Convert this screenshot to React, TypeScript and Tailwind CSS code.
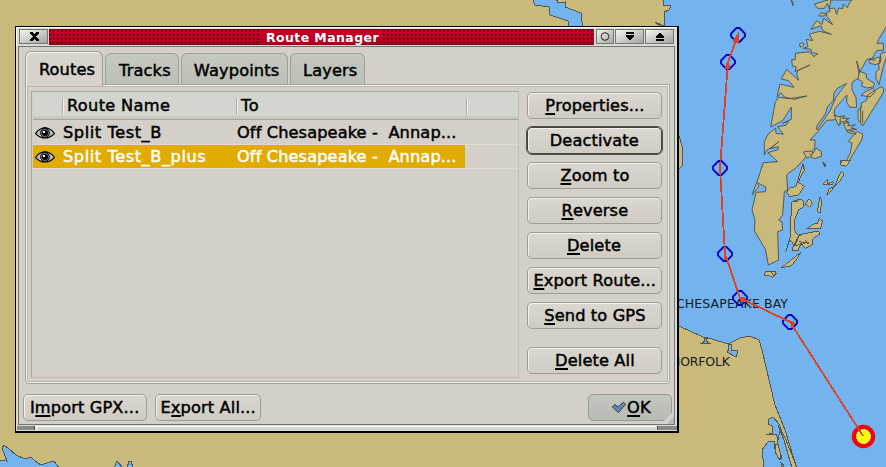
import React from "react";

const label = (s: string) => {
  const i = s.indexOf("&");
  if (i < 0) return s;
  return (
    <>
      {s.slice(0, i)}
      <span className="inline-block h-[18px] border-b-2 border-black align-top">{s[i + 1]}</span>
      {s.slice(i + 2)}
    </>
  );
};

function T({ children, className = "tracking-[0.12px]" }: { children: React.ReactNode; className?: string }) {
  return (
    <span
      className={`inline-block shrink-0 scale-x-[1.08] whitespace-pre text-[15px] leading-[18px] [-webkit-text-stroke:0.45px_currentColor] ${className}`}
    >
      {children}
    </span>
  );
}

function Btn({ text, className = "border-[#a19d8e]" }: { text: string; className?: string }) {
  return (
    <button
      className={`flex h-[27px] shrink-0 items-center justify-center rounded-[5px] border bg-gradient-to-b from-[#dbd7d0] to-[#d0ccc4] shadow-[inset_1px_1px_0_#f2f0ea] ${className}`}
    >
      <T>{label(text)}</T>
    </button>
  );
}

function Tab({ text, active, className = "" }: { text: string; active?: boolean; className?: string }) {
  return (
    <div
      className={`flex justify-center rounded-t-[6px] border border-b-0 border-[#9da194] ${
        active
          ? "relative z-10 h-[35px] bg-[#d7d2cb] pl-[6px] pt-[9px] shadow-[inset_1px_1px_0_#f4f2ee]"
          : "mb-[2px] h-[31px] bg-gradient-to-b from-[#c4c8be] to-[#bbbfb5] pl-[5px] pt-[8px]"
      } ${className}`}
    >
      <T>{text}</T>
    </div>
  );
}

function TitleBtn({ children, className }: { children: React.ReactNode; className: string }) {
  return (
    <div className={`flex h-[15px] items-center justify-center border border-[#74776f] bg-gradient-to-br from-[#f4f5f2] to-[#a3a69f] ${className}`}>
      <svg width="14" height="11" viewBox="0 0 14 11" shapeRendering="crispEdges">{children}</svg>
    </div>
  );
}

function Eye() {
  return (
    <svg width="20" height="14" viewBox="0 0 20 14" className="shrink-0">
      <path d="M0.5 7.5 Q4 2.5 10 1.7 Q16 2.5 19.5 7.5 Q15 12 10 12 Q5 12 0.5 7.5Z" fill="#fff" stroke="#000" strokeWidth="1.2" />
      <circle cx="10" cy="7" r="4.5" fill="#777" stroke="#000" />
      <circle cx="10" cy="7" r="3" fill="#000" />
      <path d="M8 5h2v2H8z" fill="#fff" />
      <path d="M3 6v3M5 4v5M15 4v6M17 6v3" stroke="#555" strokeWidth="0.8" />
    </svg>
  );
}

function Row({ name, selected }: { name: string; selected?: boolean }) {
  return (
    <div className={`flex h-6 border-b border-[#dedad4] ${selected ? "text-white" : "text-black"}`}>
      <div className={`flex h-[23px] w-[432px] items-center ${selected ? "bg-[#e2ab00]" : ""}`}>
        <div className="w-[30px] pl-[2px]">
          <Eye />
        </div>
        <div className="w-[174px]">
          <T className="origin-left tracking-[0.52px]">{name}</T>
        </div>
        <T className="origin-left tracking-[0.1px]">{"Off Chesapeake -  Annap..."}</T>
      </div>
    </div>
  );
}

function HeadSep() {
  return <div className="h-[16px] w-[2px] border-l border-r border-l-[#a6aaa2] border-r-[#f4f6f2]" />;
}

const waypoints = [[738, 35], [728, 62], [720, 168], [725, 254], [740, 298], [790, 322]];
const arrows = [
  "738,34 733,41 738,43",
  "728,61 725,68 730,69",
  "724,254 724,259 728,260",
  "740,297 741,301 745,301 744,297",
  "790,321 792,327 795,323",
];

function Chart() {
  return (
    <svg className="absolute inset-0" width="886" height="467" viewBox="0 0 886 467" shapeRendering="crispEdges">
      <rect width="886" height="467" fill="#73b4f0" />
      <g fill="#c9b97a" stroke="#54584f" strokeWidth="1">
        <path d="M-2 -2H663V5L671 6L669 10L664 12V26L655 22L665 30V120L679 136L682 146L683 158L682 166L679 169L660 190V318L679 326L703 337L712 339L728 344L740 338L750 336L759 340L762 350L775 405L785 430L797 469H-2Z" />
      </g>
      <g fill="#73b4f0" stroke="#54584f" strokeWidth="1">
        <path d="M532 -2L535 5L549 7L550 15L568 21L570 30H583L581 13L565 7V2L558 3L556 -2Z" />
        <path d="M-2 460L7 461L2 448L4 445L9 449L16 455L25 459L31 457L35 461L41 465L50 462L54 461L59 468H-2Z" />
        <path d="M114 468L117 461L123 468ZM127 468L129 461H131L133 468Z" />
        <path d="M704 338L705 341L702 343H709L706 341L707 338Z" />
        <path d="M728 344L729 349L727 352L736 357L738 351L731 350L732 344Z" />
        <path d="M769 419L773 417L779 424L782 431L778 440L776 434L766 435L773 433L772 426L768 424Z" />
        <path d="M764 468L762 450L768 442L774 441L775 449L782 459L780 452L777 444L780 431L785 440L792 468Z" />
      </g>
      <g fill="#c9b97a" stroke="#54584f" strokeWidth="1">
        <path d="M775 445L778 444L781 456L780 460L775 452ZM778 425L786 440L797 468H792L784 440ZM781 463L784 465L782 468Z" />
      </g>
      <g transform="translate(766 0) scale(.33333)" fill="#c9b97a" stroke="#54584f" strokeWidth="3" strokeLinejoin="bevel">
        <path d="M200 -4L170 5L145 12L155 25L175 25L184 10L190 25L192 34L181 38L183 50L200 74L173 55L167 74L152 62L135 88L165 77L170 92L196 103L161 94L130 102L140 122L121 118L126 140L112 145L135 148L137 158L156 161L143 170L130 155L88 160L88 179L77 179L79 198L91 201L87 215L132 195L95 212L92 222L98 241L62 208L46 237L68 242L84 262L42 252L33 292L45 278L55 291L85 298L123 288L70 296L38 292L28 306L14 381L50 362L76 322V358L50 370L68 364L60 376L35 380L52 403L30 400L29 384L6 403L-5 425V465L3 450L23 438L39 424L13 446L38 440L36 449L6 458L35 485L-8 488L-25 540L-42 585L-22 560L-25 548L0 562L-2 575L-30 577L-42 630L-33 660L-35 692L-2 748L7 795L38 780L35 695L50 690L48 665L38 660L50 645L55 575L65 570L62 525L67 520L92 502L132 458L146 444L147 420L132 420L156 394L182 361L225 358L204 342L206 327L243 285L242 307L252 322L272 322L270 292L258 270V247L278 234L280 226L272 183L282 215L303 178L318 175L333 151H352V130H333L338 118L364 75V-4Z" />
        <path fill="#73b4f0" d="M242 250L213 266L204 279L202 301L184 321L178 342L152 379L153 390L192 333L210 291ZM195 0L190 26L206 24L212 43L218 24L231 26L231 12L245 23L247 15L257 0Z" />
        <path d="M158 48L165 38L182 42L174 48ZM100 132L110 128L114 135L104 142ZM309 180L345 170L343 188L329 194L312 190ZM362 155L345 160L338 195L340 208L330 215V235L339 254L352 199L364 161ZM276 237L281 214L300 221L302 235L325 250L323 261L302 264L286 258L291 247ZM298 275L320 265L328 276L312 291L285 286ZM345 260L353 265L352 278L290 378L276 358L276 330L286 323V309L302 301L305 285ZM204 345L215 350L237 348L228 355L250 355L238 361L247 366L225 365L218 378ZM232 370L250 368L245 378L268 374L254 384L272 388L241 391L265 395L270 403L244 397ZM274 394L290 402L288 418L240 498L225 495L223 481L239 486L253 460L258 429L247 425L257 412ZM112 456L130 453L143 458L150 444L166 455V469L146 476L132 470L123 474ZM104 525L111 492L116 510ZM170 486L177 501ZM75 0L82 18L80 4Z" />
        <path fill="none" d="M284 320V366M290 332V370M130 460L137 468L140 455M223 348L222 376M309 178L328 181" />
      </g>
      <g transform="translate(666 160) scale(.33333)" fill="#c9b97a" stroke="#54584f" strokeWidth="3">
        <path d="M411 12L415 30L405 47L397 68L415 79L397 105L372 110L361 98L370 85L390 79L402 39ZM527 0L524 15L541 19L554 0ZM472 8L478 13V21ZM470 72L486 56L485 72L502 65L499 74ZM526 34L533 43L521 65L481 106L489 88L506 77ZM462 110L468 124L462 158L454 155ZM429 117L440 130L430 142L418 132ZM377 125L405 117L413 126V140L397 150L385 183V212L399 228L387 257L370 239L359 277L372 235ZM421 207L446 190H455L460 175L470 183L464 205ZM377 271L399 224L458 213L461 222L440 237V253L418 265L405 250L396 273ZM346 323L406 276L377 317ZM294 345L300 334L328 333L331 340L321 352L309 346Z" />
        <path fill="none" d="M384 125L397 123L393 117M399 228L410 222M387 257L417 251M316 336L321 346L331 340M400 245L430 250L416 240" />
      </g>
      <g shapeRendering="auto" fontSize="12.5" fill="#141b22">
        <text x="676" y="308" textLength="112">CHESAPEAKE BAY</text>
        <text x="671" y="366" textLength="59">NORFOLK</text>
      </g>
      {waypoints.map(([x, y]) => (
        <g key={y} transform={`translate(${x} ${y})`}>
          <path d="M-1.5 -7H1.5L7 -1.5V1.5L1.5 7H-1.5L-7 1.5V-1.5Z" fill="none" stroke="#0000c0" strokeWidth="1.8" shapeRendering="auto" />
          <rect x="-1" y="-1" width="2" height="2" fill="#0000c0" />
        </g>
      ))}
      <circle cx="863.5" cy="436.5" r="9.5" fill="#ff0" stroke="#f00" strokeWidth="4.4" shapeRendering="auto" />
      <circle cx="863.5" cy="436.5" r="7" fill="none" stroke="#b8cf9c" strokeWidth="1" />
      <path d="M738 35L728 62L720 168L725 254L740 298L790 322L863 436" fill="none" stroke="#e04023" strokeWidth="1.8" />
      {arrows.map((p) => (
        <polygon key={p} points={p} fill="#e04023" stroke="#e04023" />
      ))}
    </svg>
  );
}

const stipple =
  "h-full bg-[radial-gradient(circle_at_1px_1px,#73001b_0.7px,transparent_0.9px),radial-gradient(circle_at_2px_2px,#e02848_0.5px,transparent_0.8px)] bg-[size:4px_4px]";

export default function App() {
  return (
    <div className="relative h-[467px] w-[886px] overflow-hidden font-['DejaVu_Sans',sans-serif] text-black">
      <Chart />
      <div className="absolute left-[15px] top-[26px] flex h-[407px] w-[664px] flex-col border border-r-2 border-b-2 border-black bg-[#d9dbd5]">
        <div className="flex h-[19px] shrink-0 gap-px border-t border-l border-white pl-[2px] pr-[3px] pt-px">
          <TitleBtn className="w-[29px]">
            <path d="M3 1h3v1h1v1h1V2h1V1h3v2h-1v1h-1v1H9v1h1v1h1v1h1v2H9V9H8V8H7v1H6v1H3V8h1V7h1V6h1V5H5V4H4V3H3z" fill="#000" />
          </TitleBtn>
          <div className="flex h-[16px] flex-1 border-y border-[#8c001d] bg-gradient-to-b from-[#c90028] to-[#a7001e]">
            <div className={`w-[211px] ${stipple}`} />
            <div className="flex flex-1 items-center justify-center pl-[2px] pt-[2px] text-[12.5px] font-bold leading-none tracking-[0.4px] text-white whitespace-nowrap">Route Manager</div>
            <div className={`w-[211px] ${stipple}`} />
          </div>
          <TitleBtn className="ml-px w-[18px]">
            <circle cx="7" cy="5.5" r="3.8" fill="none" stroke="#222" strokeWidth="1" shapeRendering="auto" />
          </TitleBtn>
          <TitleBtn className="w-[29px]">
            <path d="M3 1h8v2H3zM3 4h8v2h-1v1H9v1H8v1H6V8H5V7H4V6H3z" fill="#000" />
          </TitleBtn>
          <TitleBtn className="w-[29px]">
            <path d="M3 8h8v2H3zM3 7V5h1V4h1V3h1V2h2v1h1v1h1v1h1v2z" fill="#000" />
          </TitleBtn>
        </div>

        <div className="relative mx-[2px] flex flex-1 flex-col border border-[#73766f] bg-[#d4cfc8] pl-[6px] pr-[3px] pt-[4px]">
          <div className="-mb-[2px] flex items-end gap-[2px]">
            <Tab text="Routes" active className="w-[78px]" />
            <Tab text="Tracks" className="w-[74px]" />
            <Tab text="Waypoints" className="w-[107px]" />
            <Tab text="Layers" className="w-[75px]" />
          </div>
          <div className="flex h-[300px] w-[645px] justify-between rounded-b-[4px] border border-[#9ea297] p-[5px] pr-[7px] shadow-[inset_0_0_0_1px_#f4f4ef,inset_0_0_0_2px_#b5b7ac]">
            <div className="mt-px h-[287px] w-[488px] border border-[#a3a79d] border-b-[#c2beb6] border-r-[#c2beb6] pl-px">
              <div className="flex h-[28px] items-center border-b border-[#a2a69c] bg-[linear-gradient(#d3d6ce_0_23px,#bfc3ba)]">
                <div className="w-[29px]" />
                <HeadSep />
                <div className="w-[172px] pl-[3px]">
                  <T className="origin-left tracking-[0.3px]">Route Name</T>
                </div>
                <HeadSep />
                <div className="w-[228px] pl-[3px]">
                  <T className="origin-left tracking-[0.5px]">To</T>
                </div>
                <HeadSep />
              </div>
              <div className="pt-px">
                <Row name="Split Test_B" />
                <Row name="Split Test_B_plus" selected />
              </div>
            </div>
            <div className="mt-[2px] flex w-[135px] flex-col gap-2">
              <Btn text="&Properties..." />
              <Btn text="Deactivate" className="border-[#44443f] outline outline-1 outline-[#55554f]" />
              <Btn text="&Zoom to" />
              <Btn text="&Reverse" />
              <Btn text="&Delete" />
              <Btn text="&Export Route..." />
              <Btn text="&Send to GPS" />
              <Btn text="&Delete All" className="mt-[10px] border-[#a19d8e]" />
            </div>
          </div>
          <div className="-ml-[2px] mt-[10px] flex">
            <Btn text="I&mport GPX..." className="w-[124px] border-[#a19d8e]" />
            <Btn text="E&xport All..." className="ml-2 w-[106px] border-[#a19d8e]" />
            <div className="-mr-px ml-auto flex h-[27px] w-[84px] items-center justify-center gap-[1px] rounded-[5px] border border-[#969a91] bg-gradient-to-b from-[#c3c7c0] to-[#b7bbb4]">
              <svg width="16" height="13" viewBox="0 0 16 13">
                <path d="M1.2 5.8L4 3.5L7 6L12.3 1.2L14.7 3.2L7.4 11.6Z" fill="#6788ad" stroke="#2c4057" strokeWidth="1" strokeLinejoin="round" />
              </svg>
              <T>{label("&OK")}</T>
            </div>
          </div>
          <svg className="absolute bottom-0 right-0" width="13" height="13" viewBox="0 0 13 13">
            <path d="M13 0V13H0Z" fill="#d2d6d0" />
            <path d="M13 5V13H6Z" fill="#b6bab3" />
          </svg>
        </div>
        <div className="flex h-[6px] shrink-0 gap-px pb-px pl-px pt-px">
          <div className="w-[18px] border-r border-[#4d4f4c] bg-[#888a87]" />
          <div className="flex-1 border-l border-t border-white bg-[#d1d5cf]" />
          <div className="w-[20px] border-l border-[#4d4f4c] bg-[#888a87]" />
        </div>
      </div>
    </div>
  );
}
